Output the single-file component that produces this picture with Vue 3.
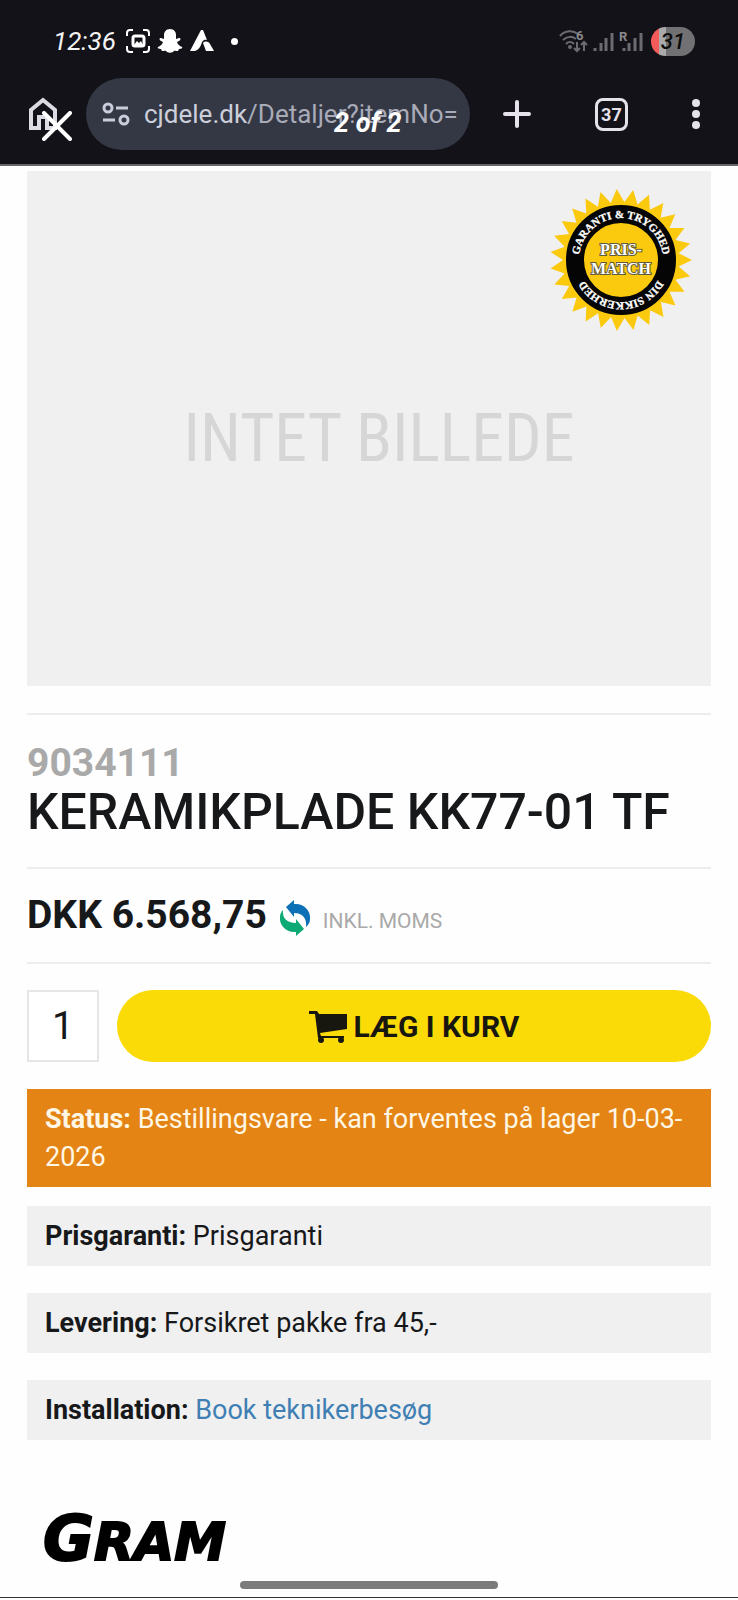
<script setup>
import { ref, computed } from 'vue';

const quantity = ref('1');

const details = [
  { label: 'Prisgaranti:', text: 'Prisgaranti' },
  { label: 'Levering:', text: 'Forsikret pakke fra 45,-' },
  { label: 'Installation:', text: 'Book teknikerbesøg', href: '#' },
];

// saw-toothed edge of the price match seal
const sealPoints = computed(() => {
  const teeth = 27;
  const points = [];
  for (let i = 0; i < teeth * 2; i++) {
    const radius = i % 2 ? 58 : 71;
    const angle = (i * Math.PI) / teeth - Math.PI / 2 - 0.06;
    const x = 71 + radius * Math.cos(angle);
    const y = 71 + radius * Math.sin(angle);
    points.push(`${x.toFixed(1)},${y.toFixed(1)}`);
  }
  return points.join(' ');
});
</script>

<template>
  <div class="screen">
    <header class="browser">
      <div class="status-bar">
        <div class="status-left">
          <span class="clock">12:36</span>
          <svg width="26" height="26" viewBox="0 0 26 26" fill="none" stroke="#fff" stroke-width="2">
            <path d="M2 8V5a3 3 0 0 1 3-3h3M18 2h3a3 3 0 0 1 3 3v3M24 18v3a3 3 0 0 1-3 3h-3M8 24H5a3 3 0 0 1-3-3v-3" />
            <rect x="8" y="8" width="11" height="10" rx="2" stroke-width="3" />
            <path d="m9 17 3-4 2 2 2-2 2 4z" fill="#fff" stroke="none" />
          </svg>
          <svg width="26" height="26" viewBox="0 0 26 26" fill="#fff">
            <path d="M13 1c4 0 6 3 6 6v4l3-1c2 0 2 2 0 3l-2 1c1 3 3 4 5 5 1 1-1 2-3 2l-1 2c-2 0-4-1-5 1-2 1-4 1-6 0-1-2-3-1-5-1l-1-2c-2 0-4-1-3-2 2-1 4-2 5-5l-2-1c-2-1-2-3 0-3l3 1V7c0-3 2-6 6-6z" />
          </svg>
          <svg width="26" height="26" viewBox="0 0 26 26" fill="#fff">
            <path d="M12 2h2l4 10c-4-1-5 2-6 5-2 4-4 6-8 6H1z" />
            <path d="M14 15c2-2 5-2 7 1l4 7h-8z" />
          </svg>
          <span class="dot"></span>
        </div>
        <div class="status-right">
          <svg width="84" height="26" viewBox="0 0 84 26" fill="none" stroke="#6b6b70" stroke-width="2">
            <path d="M1 8c5-6 13-6 18-2M4 12c4-4 9-4 13-1M7 16c3-3 5-3 8 0" />
            <circle cx="11" cy="19" r="1" />
            <path d="M18 14v9M15 20l3 3 3-3M25 23v-9M22 17l3-3 3 3" />
            <path d="M36 20v3M42 15v8M47 10v13M53 5v18" stroke-width="3" />
            <path d="M65 20v3M70 15v8M76 10v13M82 5v18" stroke-width="3" />
            <g class="signal-text">
              <text x="17" y="12">6</text>
              <text x="60" y="13">R</text>
            </g>
          </svg>
          <span class="battery">31</span>
        </div>
      </div>
      <div class="toolbar">
        <button class="icon-button home" type="button" aria-label="Home">
          <svg width="30" height="34" viewBox="0 0 30 34" fill="none" stroke="#dcdbe3" stroke-width="4">
            <path d="M3 31V13L15 3l12 10v18h-8V20h-8v11z" />
          </svg>
          <svg class="close" width="30" height="30" viewBox="0 0 30 30" fill="none" stroke="#fff" stroke-width="4" stroke-linecap="round">
            <path d="M2 2l26 26M28 2L2 28" />
          </svg>
        </button>
        <button class="address" type="button">
          <svg width="28" height="24" viewBox="0 0 28 24" fill="none" stroke="#c9ccda" stroke-width="3">
            <circle cx="6" cy="6" r="4" />
            <path d="M14 6h12M1 18h12" />
            <circle cx="22" cy="18" r="4" />
          </svg>
          <span class="url"><span class="host">cjdele.dk</span>/Detaljer?itemNo=</span>
          <span class="counter">2 of 2</span>
        </button>
        <div class="actions">
          <button class="icon-button" type="button" aria-label="New tab">
            <svg width="28" height="28" viewBox="0 0 28 28" stroke="#e6e2ec" stroke-width="4" stroke-linecap="round">
              <path d="M14 2v24M2 14h24" />
            </svg>
          </button>
          <button class="icon-button tabs" type="button">37</button>
          <button class="icon-button" type="button" aria-label="Menu">
            <svg width="8" height="30" viewBox="0 0 8 30" fill="#e6e2ec">
              <circle cx="4" cy="4" r="4" />
              <circle cx="4" cy="15" r="4" />
              <circle cx="4" cy="26" r="4" />
            </svg>
          </button>
        </div>
      </div>
    </header>

    <main class="product">
      <div class="picture">
        <span>INTET BILLEDE</span>
        <svg class="seal" width="142" height="142" viewBox="0 0 142 142">
          <defs>
            <path id="seal-top" d="M29 71A42 42 0 0 1 113 71" />
            <path id="seal-bottom" d="M113 71A42 42 0 0 1 29 71" />
          </defs>
          <polygon :points="sealPoints" fill="#fbc90d" />
          <circle cx="71" cy="71" r="46" fill="none" stroke="#050505" stroke-width="18" />
          <g class="seal-ring">
            <text><textPath href="#seal-top" startOffset="50%">GARANTI &amp; TRYGHED</textPath></text>
            <text><textPath href="#seal-bottom" startOffset="50%">DIN SIKKERHED</textPath></text>
          </g>
          <g class="seal-center">
            <text x="71" y="66">PRIS-</text>
            <text x="71" y="85">MATCH</text>
          </g>
        </svg>
      </div>

      <section class="heading">
        <p class="item-no">9034111</p>
        <h1>KERAMIKPLADE KK77-01 TF</h1>
      </section>

      <section class="price">
        <strong>DKK 6.568,75</strong>
        <svg width="32" height="36" viewBox="0 0 32 36">
          <path d="M7 7 15 0v4c10-1 17 7 16 15 0 4-2 6-4 8 1-8-3-14-12-14v4z" fill="#0b70b5" />
          <path d="M25 29 17 36v-4C7 33 0 25 1 17c0-3 1-5 3-7-1 8 4 13 13 13v-4z" fill="#0eaa76" />
        </svg>
        <span class="vat">INKL. MOMS</span>
      </section>

      <form class="buy" @submit.prevent>
        <input v-model="quantity" class="quantity" type="text" aria-label="Antal" />
        <button class="add" type="submit">
          <svg width="38" height="34" viewBox="0 0 38 34" fill="#17170f">
            <path d="M0 2h8l2 3h28v15l-27 4 1 3h23v2H9L6 5H0z" />
            <circle cx="12" cy="31" r="3" />
            <circle cx="32" cy="31" r="3" />
          </svg>
          LÆG I KURV
        </button>
      </form>

      <p class="box status"><b>Status:</b> Bestillingsvare - kan forventes på lager 10-03-2026</p>
      <div class="details">
        <p v-for="item in details" :key="item.label" class="box">
          <b>{{ item.label }}</b>{{ ' ' }}
          <a v-if="item.href" :href="item.href">{{ item.text }}</a>
          <template v-else>{{ item.text }}</template>
        </p>
      </div>

      <div class="brand"><span class="initial">G</span>RAM</div>
    </main>

    <div class="home-bar"></div>
  </div>
</template>

<style>
body {
  background: #fefefe;
}
</style>

<style scoped>
.screen {
  border-bottom: 1px solid #333;
  color: #17181a;
  font-family: Roboto, 'Liberation Sans', sans-serif;
}

p,
h1 {
  margin: 0;
}

button {
  padding: 0;
  border: 0;
  background: none;
  font-family: inherit;
}

svg {
  display: block;
  flex: none;
}

.browser {
  padding-top: 24px;
  border-bottom: 2px solid #66666a;
  background: #121218;
}

.status-bar {
  display: flex;
  align-items: center;
  justify-content: space-between;
  height: 34px;
  padding: 0 43px 0 53px;
}

.status-left,
.status-right {
  display: flex;
  align-items: center;
}

.status-left {
  gap: 6px;
}

.status-right {
  gap: 8px;
}

.clock {
  width: 66px;
  color: #f4f4f4;
  font-size: 26px;
  font-style: italic;
}

.dot {
  width: 7px;
  height: 7px;
  margin-left: 10px;
  border-radius: 50%;
  background: #fff;
}

.signal-text {
  fill: #88888c;
  stroke: none;
  font-size: 13px;
  font-weight: 700;
}

.battery {
  width: 44px;
  border-radius: 15px;
  background: linear-gradient(90deg, #f35b5b 8px, #aaa 8px, #aaa 15px, #717174 15px);
  color: #0c0c0c;
  font-size: 22px;
  font-style: italic;
  font-weight: 500;
  line-height: 29px;
  text-align: center;
}

.toolbar {
  display: flex;
  align-items: center;
  padding: 20px 38px 14px 28px;
}

.icon-button {
  display: flex;
  align-items: center;
  justify-content: center;
}

.home {
  position: relative;
  margin-right: 28px;
}

.close {
  position: absolute;
  top: 14px;
  left: 14px;
}

.address {
  position: relative;
  display: flex;
  flex: 1;
  align-items: center;
  gap: 14px;
  height: 72px;
  padding: 0 12px 0 16px;
  border-radius: 36px;
  background: #343845;
  color: #a9abb8;
  font-size: 26px;
}

.url {
  white-space: nowrap;
}

.host {
  color: #cdcfdb;
}

.counter {
  position: absolute;
  top: 29px;
  left: 248px;
  color: #fff;
  font-size: 27px;
  font-style: italic;
  font-weight: 700;
  white-space: nowrap;
}

.actions {
  display: flex;
  align-items: center;
  justify-content: space-between;
  width: 203px;
  margin-left: 33px;
}

.tabs {
  box-sizing: border-box;
  width: 33px;
  height: 33px;
  border: 3px solid #e6e2ec;
  border-radius: 8px;
  color: #e6e2ec;
  font-size: 18px;
  font-weight: 700;
}

.product {
  padding: 5px 27px 0;
}

.picture {
  position: relative;
  display: flex;
  box-sizing: border-box;
  align-items: center;
  justify-content: center;
  aspect-ratio: 684 / 515;
  padding: 20px 0 0 20px;
  background: #f0f0f0;
  color: #d6d6d6;
  font-family: 'Roboto Condensed', 'Open Sans Condensed', 'Liberation Sans Narrow', sans-serif;
  font-size: 66px;
  font-weight: 400;
  line-height: 68px;
}

.seal {
  position: absolute;
  top: 18px;
  right: 19px;
}

.seal-ring,
.seal-center {
  fill: #fff;
  font-family: 'Liberation Serif', serif;
  font-weight: 700;
  text-anchor: middle;
}

.seal-ring {
  stroke: #fff;
  stroke-width: 0.3;
  font-size: 11px;
}

.seal-center {
  stroke: #5f5a3c;
  stroke-width: 2;
  paint-order: stroke;
  font-size: 16px;
}

.heading {
  margin-top: 27px;
  padding: 28px 0 26px;
  border-top: 2px solid #ededed;
  border-bottom: 2px solid #ededed;
}

.item-no {
  color: #a9a9a9;
  font-size: 39px;
  font-weight: 700;
  line-height: 40px;
}

h1 {
  font-size: 50px;
  font-weight: 500;
  line-height: 58px;
}

.price {
  display: flex;
  align-items: baseline;
  gap: 12px;
  padding: 22px 0 17px;
  border-bottom: 2px solid #ededed;
  line-height: 48px;
}

.price strong {
  font-size: 39px;
}

.price svg {
  align-self: center;
}

.vat {
  color: #a9a9a9;
  font-size: 21px;
}

.buy {
  display: flex;
  gap: 18px;
  margin: 26px 0 27px;
}

.quantity {
  box-sizing: border-box;
  width: 72px;
  height: 72px;
  padding: 0;
  border: 2px solid #e6e6e6;
  background: #fff;
  color: inherit;
  font-family: inherit;
  font-size: 39px;
  text-align: center;
}

.add {
  display: flex;
  flex: 1;
  align-items: center;
  justify-content: center;
  gap: 7px;
  border-radius: 36px;
  background: #fadb08;
  color: #17170f;
  font-size: 30px;
  font-weight: 700;
}

.box {
  padding: 11px 18px;
  background: #f0f0f0;
  font-size: 27px;
  line-height: 38px;
}

.status {
  margin-bottom: 19px;
  background: #e38414;
  color: #fff6e4;
}

.details {
  display: grid;
  gap: 27px;
}

.box a {
  color: #3f7fb3;
  text-decoration: none;
}

.brand {
  margin: 69px 0 0 16px;
  color: #000;
  font-family: 'DejaVu Sans', sans-serif;
  font-size: 52px;
  font-style: italic;
  font-weight: 700;
  line-height: 60px;
  -webkit-text-stroke: 2px #000;
}

.initial {
  font-size: 62px;
}

.home-bar {
  width: 35%;
  height: 8px;
  margin: 9px auto 8px;
  border-radius: 4px;
  background: #7b7b7b;
}
</style>
